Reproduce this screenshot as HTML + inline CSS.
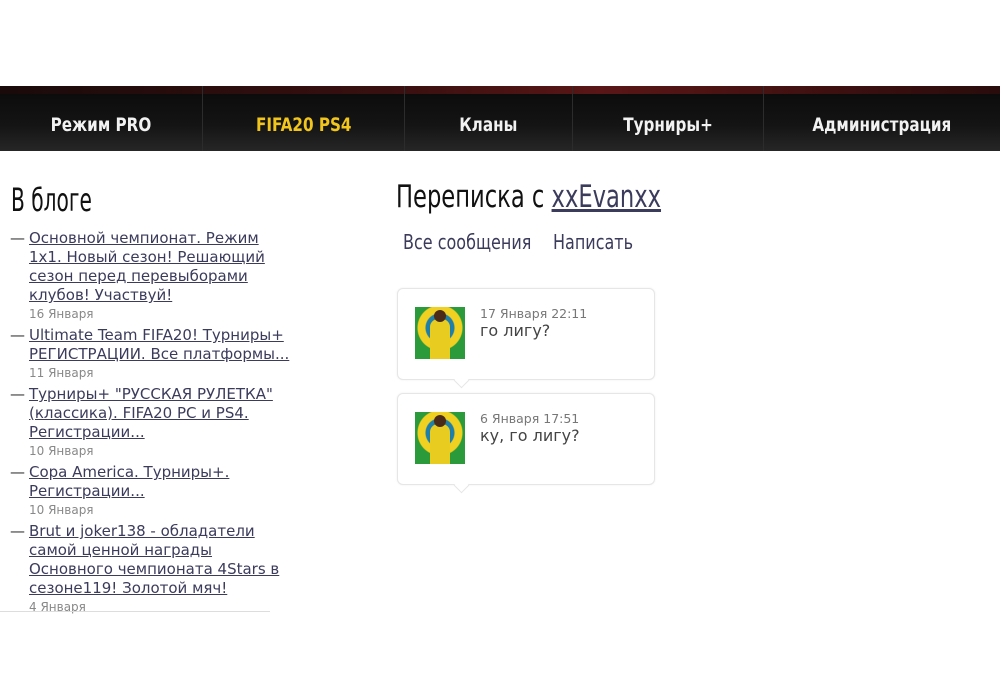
<!DOCTYPE html>
<html><head><meta charset="utf-8"><style>
body{margin:0;width:1000px;height:700px;background:#fff;position:relative;overflow:hidden;font-family:"DejaVu Sans","Liberation Sans",sans-serif}
.nav{position:absolute;left:0;top:86px;width:1000px;height:65px;background:linear-gradient(#2a1212 0,#0c0c0c 12%,#141414 60%,#262626 100%)}
.nav .top{position:absolute;left:0;top:0;width:1000px;height:8px;background:linear-gradient(90deg,#1a0a0a,#3a1010 40%,#5a1616 60%,#2a0c0c)}
.nav div.i{position:absolute;top:0;height:65px;line-height:78px;text-align:center;color:#f2f2f2;font-weight:bold;font-size:19px;border-right:1px solid #2c2c2c}
.sx{display:inline-block;transform:scaleX(.8);white-space:nowrap}
.h{position:absolute;color:#111;font-size:28px;transform-origin:left top;white-space:nowrap}
.list{position:absolute;left:10px;top:229px;font-size:15px;line-height:19px;color:#333;white-space:nowrap}
.it{position:relative;padding-left:19px;margin-bottom:2px}
.it:before{content:"—";position:absolute;left:0;top:0;color:#333}
.it a{color:#3b3b5c;text-decoration:underline}
.d{font-size:12px;color:#888;line-height:19px}
.msg{position:absolute;left:397px;width:256px;height:90px;border:1px solid #e6e6e6;border-radius:6px;background:#fff;box-shadow:0 0 2px #eee}
.msg .av{position:absolute;left:17px;top:18px;width:50px;height:52px;background:radial-gradient(circle at 50% 40%,#1f7fa8 0 14px,#f0d020 15px 22px,#2a9a3a 23px)}
.msg .av:after{content:"";position:absolute;left:15px;top:12px;width:20px;height:40px;background:#e8cc20;border-radius:8px 8px 0 0}
.msg .av:before{content:"";position:absolute;left:19px;top:3px;width:12px;height:12px;background:#4a2a18;border-radius:50%;z-index:1}
.msg .t{position:absolute;left:82px;top:17px;font-size:12.5px;color:#777}
.msg .b{position:absolute;left:82px;top:32px;font-size:16px;color:#444}
.msg .tail{position:absolute;left:58px;bottom:-7px;width:10px;height:10px;background:#fff;border-right:1px solid #e6e6e6;border-bottom:1px solid #e6e6e6;transform:rotate(45deg)}
</style></head><body>
<div class="nav"><div class="top"></div>
<div class="i" style="left:0;width:202px"><span class="sx">Режим PRO</span></div>
<div class="i" style="left:203px;width:201px;color:#f2c51c"><span class="sx">FIFA20 PS4</span></div>
<div class="i" style="left:405px;width:167px"><span class="sx">Кланы</span></div>
<div class="i" style="left:573px;width:190px"><span class="sx">Турниры+</span></div>
<div class="i" style="left:764px;width:236px;border:none"><span class="sx">Администрация</span></div>
</div>
<div class="h" style="left:11px;top:181px;font-size:32px;transform:scaleX(.63)">В блоге</div>
<div class="h" style="left:396px;top:179px;font-size:31px;transform:scaleX(.73)">Переписка с <a style="color:#3b3b5c;text-decoration:underline">xxEvanxx</a></div>
<div class="h" style="left:403px;top:230px;font-size:20px;color:#3b3b5c;transform:scaleX(.8)">Все сообщения</div>
<div class="h" style="left:553px;top:230px;font-size:20px;color:#3b3b5c;transform:scaleX(.8)">Написать</div>
<div class="list">
<div class="it"><a>Основной чемпионат. Режим<br>1x1. Новый сезон! Решающий<br>сезон перед перевыборами<br>клубов! Участвуй!</a><div class="d">16 Января</div></div>
<div class="it"><a>Ultimate Team FIFA20! Турниры+<br>РЕГИСТРАЦИИ. Все платформы...</a><div class="d">11 Января</div></div>
<div class="it"><a>Турниры+ "РУССКАЯ РУЛЕТКА"<br>(классика). FIFA20 PC и PS4.<br>Регистрации...</a><div class="d">10 Января</div></div>
<div class="it"><a>Copa America. Турниры+.<br>Регистрации...</a><div class="d">10 Января</div></div>
<div class="it"><a>Brut и joker138 - обладатели<br>самой ценной награды<br>Основного чемпионата 4Stars в<br>сезоне119! Золотой мяч!</a><div class="d">4 Января</div></div>
</div>
<div style="position:absolute;left:0;top:611px;width:270px;height:1px;background:#ddd"></div>
<div class="msg" style="top:288px"><div class="av"></div><div class="t">17 Января 22:11</div><div class="b">го лигу?</div><div class="tail"></div></div>
<div class="msg" style="top:393px"><div class="av"></div><div class="t">6 Января 17:51</div><div class="b">ку, го лигу?</div><div class="tail"></div></div>
</body></html>
